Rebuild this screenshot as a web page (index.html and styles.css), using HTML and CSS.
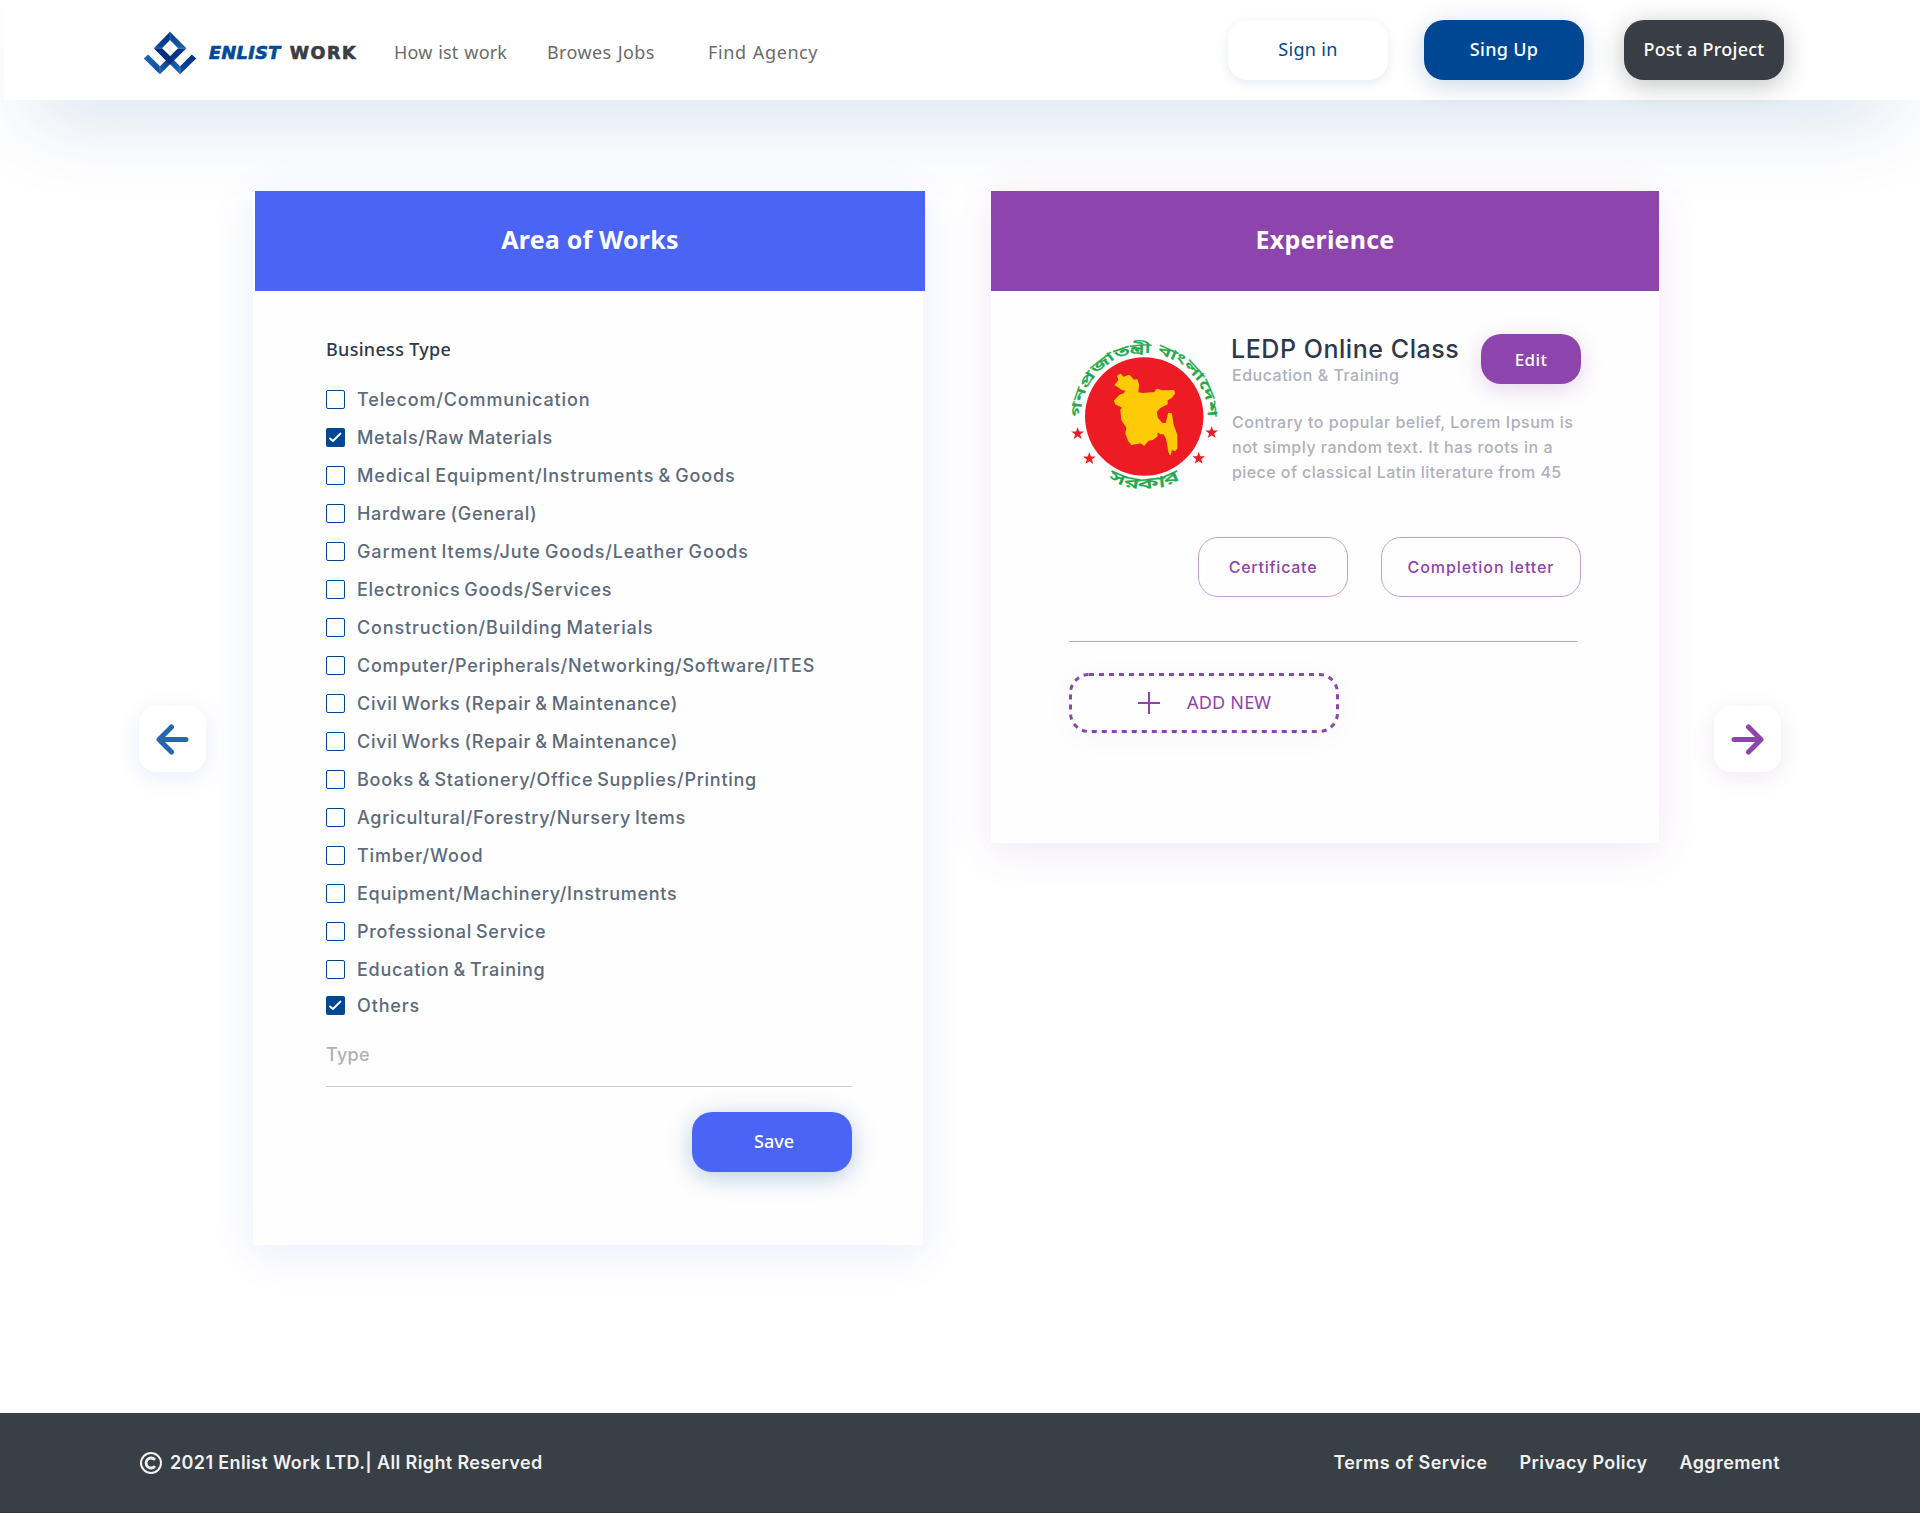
FILE: index.html
```html
<!DOCTYPE html>
<html lang="en">
<head>
<meta charset="utf-8">
<title>Enlist Work</title>
<link rel="stylesheet" href="styles.css">
</head>
<body>
<header class="site-header">
  <a class="brand">
    <svg class="brand-mark" width="54" height="44" viewBox="11 13 160 131">
      <defs>
        <linearGradient id="ga" x1="0" y1="1" x2="1" y2="0"><stop offset="0" stop-color="#0a4da0"/><stop offset="1" stop-color="#002f7d"/></linearGradient>
        <linearGradient id="gb" x1="0" y1="0" x2="1" y2="1"><stop offset="0" stop-color="#00398a"/><stop offset="1" stop-color="#1f66b5"/></linearGradient>
        <linearGradient id="gc" x1="0" y1="0" x2="1" y2="1"><stop offset="0" stop-color="#1f66b5"/><stop offset="1" stop-color="#0b4c9f"/></linearGradient>
        <linearGradient id="gd" x1="0" y1="1" x2="1" y2="0"><stop offset="0" stop-color="#1a5eae"/><stop offset=".6" stop-color="#00348a"/></linearGradient>
      </defs>
      <path fill="url(#ga)" d="M91 15v25L67 64H43z"/>
      <path fill="url(#gb)" d="M91 15l49 49h-25L91 40z"/>
      <path fill="url(#gd)" d="M140 64h-25l-54 54v24z"/>
      <path fill="url(#gb)" d="M43 64h24l54 54v24z"/>
      <path fill="#002f80" d="M67 64l24 24 12 12-12 13-36-37-12-12z"/>
      <path fill="url(#gc)" d="M61 142v-24L26 83 13 95z"/>
      <path fill="url(#ga)" d="M121 142v-24l35-35 13 12z"/>
      <path stroke="#6f9bd0" stroke-width="1.5" d="M43 64h24M115 64h25M61 118v24M121 118v24M91 15v25"/>
    </svg>
    <span class="brand-name"><span class="brand-first">ENLIST</span><span class="brand-second">WORK</span></span>
  </a>
  <nav class="main-nav">
    <a class="nav-how">How ist work</a>
    <a class="nav-jobs">Browes Jobs</a>
    <a class="nav-agency">Find Agency</a>
  </nav>
  <div class="header-actions">
    <a class="btn btn-signin">Sign in</a>
    <a class="btn btn-signup">Sing Up</a>
    <a class="btn btn-post">Post a Project</a>
  </div>
</header>

<main class="steps">
  <a class="step step-prev">
    <svg width="33" height="31" viewBox="0 0 33 31"><path d="M15.5 3 3 15.5 15.5 28M3.5 15.5h26.5"/></svg>
  </a>

  <section class="card card-areas">
    <h2 class="card-title">Area of Works</h2>
    <div class="card-body">
      <h3 class="field-title">Business Type</h3>
      <ul class="options">
        <li><i class="box"></i><span class="wide">Telecom/Communication</span></li>
        <li><i class="box checked"><svg width="19" height="19" viewBox="0 0 19 19"><path d="M4 10.5 7 13 14.5 5.5"/></svg></i><span class="narrow">Metals/Raw Materials</span></li>
        <li><i class="box"></i><span class="wide">Medical Equipment/Instruments &amp; Goods</span></li>
        <li><i class="box"></i><span>Hardware (General)</span></li>
        <li><i class="box"></i><span class="wide">Garment Items/Jute Goods/Leather Goods</span></li>
        <li><i class="box"></i><span>Electronics Goods/Services</span></li>
        <li><i class="box"></i><span class="wide">Construction/Building Materials</span></li>
        <li><i class="box"></i><span>Computer/Peripherals/Networking/Software/ITES</span></li>
        <li><i class="box"></i><span>Civil Works (Repair &amp; Maintenance)</span></li>
        <li><i class="box"></i><span>Civil Works (Repair &amp; Maintenance)</span></li>
        <li><i class="box"></i><span>Books &amp; Stationery/Office Supplies/Printing</span></li>
        <li><i class="box"></i><span>Agricultural/Forestry/Nursery Items</span></li>
        <li><i class="box"></i><span class="wide">Timber/Wood</span></li>
        <li><i class="box"></i><span>Equipment/Machinery/Instruments</span></li>
        <li><i class="box"></i><span>Professional Service</span></li>
        <li><i class="box"></i><span>Education &amp; Training</span></li>
        <li class="others"><i class="box checked"><svg width="19" height="19" viewBox="0 0 19 19"><path d="M4 10.5 7 13 14.5 5.5"/></svg></i><span class="wide">Others</span></li>
      </ul>
      <div class="type-input">Type</div>
      <a class="btn btn-save">Save</a>
    </div>
  </section>

  <section class="card card-experience">
    <h2 class="card-title">Experience</h2>
    <div class="card-body">
      <article class="entry">
        <svg class="emblem" width="170" height="170" viewBox="0 0 170 170">
          <defs>
            <path id="arc-top" d="M21.5 96.5A63.5 63.5 0 1 1 146.9 96.5"/>
            <path id="arc-bottom" d="M12.2 86.7A72 72 0 0 0 156.2 86.7"/>
            <path id="star" d="M0-20 4.7-6.5 19-6.2 7.6 2.5 11.8 16.2 0 8-11.8 16.2-7.6 2.5-19-6.2-4.7-6.5z"/>
          </defs>
          <circle cx="84.2" cy="86.5" r="59.2" fill="#ed1c24"/>
          <g transform="scale(.33333)">
            <path fill="#ffcb08" stroke="#ffcb08" stroke-width="4" stroke-linejoin="round" d="M166 165 178 150 173 138 182 133 189 143 208 136 221 151 231 150 235 165 233 188 248 191 284 188 291 178 305 183 341 182 343 190 334 202 321 210 321 222 300 232 288 245 292 265 307 281 319 280 326 250 334 252 339 285 350 315 350 355 345 361 333 358 331 373 327 365 320 325 312 311 302 311 290 302 291 318 278 328 265 330 252 345 243 338 215 343 206 332 198 310 201 293 186 270 183 240 189 232 167 222 164 212 179 196 192 192 199 181 185 178 175 170z"/>
            <g fill="#ed1c24">
              <use href="#star" x="53" y="311"/><use href="#star" x="88" y="386"/><use href="#star" x="416" y="385"/><use href="#star" x="455" y="308"/>
            </g>
          </g>
          <g class="emblem-text">
            <text font-size="13.5" textLength="200" lengthAdjust="spacingAndGlyphs"><textPath href="#arc-top" startOffset="50%">গনপ্রজাতন্ত্রী বাংলাদেশ</textPath></text>
            <text font-size="15.5" textLength="75" lengthAdjust="spacingAndGlyphs"><textPath href="#arc-bottom" startOffset="50%">সরকার</textPath></text>
          </g>
        </svg>
        <div class="entry-info">
          <div class="entry-head">
            <div>
              <h3 class="entry-title">LEDP Online Class</h3>
              <p class="entry-category">Education &amp; Training</p>
            </div>
            <a class="btn btn-edit">Edit</a>
          </div>
          <p class="entry-text">Contrary to popular belief, Lorem Ipsum is<br>not simply random text. It has roots in a<br><span class="last-line">piece of classical Latin literature from 45</span></p>
        </div>
      </article>
      <div class="documents">
        <a class="btn btn-outline btn-certificate">Certificate</a>
        <a class="btn btn-outline btn-letter">Completion letter</a>
      </div>
      <hr class="divider">
      <a class="add-new">
        <svg class="add-frame" width="270" height="60" viewBox="0 0 270 60"><rect x="1.5" y="1.5" width="267" height="57" rx="18.5"/></svg>
        <svg class="add-plus" width="22" height="22" viewBox="0 0 22 22"><path d="M11 0v22M0 11h22"/></svg>
        <span>ADD NEW</span>
      </a>
    </div>
  </section>

  <a class="step step-next">
    <svg width="33" height="31" viewBox="0 0 33 31"><path d="M17.5 3 30 15.5 17.5 28M29.5 15.5H3"/></svg>
  </a>
</main>

<footer class="site-footer">
  <svg class="copyright" width="22" height="22" viewBox="0 0 22 22"><circle cx="11" cy="11" r="10"/><path d="M15 7.9a5 5 0 1 0 0 6.2" stroke-width="2.8"/></svg>
  <span class="legal">2021 Enlist Work LTD.| All Right Reserved</span>
  <nav class="footer-nav">
    <a>Terms of Service</a>
    <a>Privacy Policy</a>
    <a>Aggrement</a>
  </nav>
</footer>
</body>
</html>
```
FILE: styles.css
```css
* { box-sizing: border-box; }
body {
  margin: 0;
  width: 1920px;
  height: 1513px;
  display: flex;
  flex-direction: column;
  overflow: hidden;
  background: #fff;
  font: 500 18px/24px Inter, sans-serif;
}
h2, h3, p, ul { margin: 0; padding: 0; font-weight: 500; }
a { white-space: nowrap; }

.site-header {
  height: 100px;
  margin-left: 4px;
  padding: 0 136px 0 139px;
  display: flex;
  align-items: center;
  background: #fff;
  box-shadow: 0 36px 84px -28px rgba(0, 71, 147, .25);
  font-family: "Noto Sans", sans-serif;
}
.brand { display: flex; align-items: center; gap: 12px; padding-top: 5px; }
.brand-mark { display: block; }
.brand-name {
  display: flex;
  justify-content: space-between;
  width: 147px;
  font: 700 17.5px/24px "DejaVu Sans", sans-serif;
}
.brand-first { color: #004a98; font-style: oblique; letter-spacing: .5px; -webkit-text-stroke: .7px #004a98; }
.brand-second { color: #383e44; letter-spacing: 1.5px; margin-right: -1px; -webkit-text-stroke: .7px #383e44; }
.main-nav {
  display: flex;
  margin-left: 38px;
  padding-top: 4px;
  color: #6b6b6b;
  font-weight: 400;
  word-spacing: 1px;
}
.nav-how { width: 153px; letter-spacing: .15px; }
.nav-jobs { width: 161px; letter-spacing: .4px; }
.nav-agency { letter-spacing: .6px; }
.header-actions { display: flex; margin-left: auto; }

.btn {
  display: flex;
  align-items: center;
  justify-content: center;
  width: 160px;
  height: 60px;
  padding-bottom: 2px;
  border-radius: 20px;
  color: #fff;
  font-family: "Noto Sans", sans-serif;
}
.btn-signin {
  margin-right: 36px;
  background: #fff;
  color: #004793;
  font-weight: 400;
  letter-spacing: .3px;
  box-shadow: 0 3px 12px rgba(0, 71, 147, .11);
}
.btn-signup {
  margin-right: 40px;
  background: #004793;
  letter-spacing: .3px;
  box-shadow: 0 5px 26px rgba(0, 71, 147, .22);
}
.btn-post {
  background: #383e44;
  letter-spacing: .25px;
  box-shadow: 0 5px 26px rgba(56, 62, 68, .32);
}

.steps { display: flex; align-items: flex-start; height: 1313px; padding-left: 139px; }
.step {
  display: flex;
  align-items: center;
  justify-content: center;
  width: 67px;
  height: 66px;
  margin-top: 606px;
  border-radius: 17px;
  background: #fff;
}
.step path { fill: none; stroke-width: 5; stroke-linecap: round; stroke-linejoin: round; }
.step-prev { box-shadow: 0 5px 22px rgba(74, 100, 246, .13); }
.step-prev path { stroke: #2566b0; }
.step-next { margin-left: 55px; box-shadow: 0 5px 22px rgba(142, 68, 173, .13); }
.step-next path { stroke: #8e44ad; }

.card { margin-top: 91px; background: #fefefe; }
.card-title {
  display: flex;
  align-items: center;
  justify-content: center;
  height: 100px;
  padding-bottom: 4px;
  color: #fff;
  font: 700 25px/34px "Noto Sans", sans-serif;
  letter-spacing: .2px;
}
.card-areas {
  width: 670px;
  height: 1054px;
  margin-left: 47px;
  box-shadow: 0 8px 40px rgba(74, 100, 246, .12);
}
.card-areas .card-title { margin: 0 -2px 0 2px; background: #4a64f6; }
.card-areas .card-body { display: flex; flex-direction: column; padding: 46px 71px 0 73px; }
.field-title {
  font: 500 18px/24px "Noto Sans", sans-serif;
  letter-spacing: .3px;
  color: #2e384d;
}
.options { list-style: none; margin-top: 19px; color: #5c6a7c; letter-spacing: .72px; word-spacing: -1.5px; }
.options li { display: flex; align-items: center; gap: 12px; height: 38px; white-space: nowrap; }
.options li span { padding-top: 2px; }
.options .others { height: 35px; }
.options .others span { padding-top: 0; }
.options .wide { letter-spacing: .86px; }
.options .narrow { letter-spacing: .6px; }
.box {
  width: 19px;
  height: 19px;
  border: 1px solid #004793;
  border-radius: 2px;
}
.box.checked { border: 0; background: #004793; }
.box svg { display: block; }
.box path { fill: none; stroke: #fff; stroke-width: 2; stroke-linecap: round; }
.type-input {
  height: 64px;
  padding-top: 20px;
  border-bottom: 1px solid #c9c9cf;
  color: #afafbd;
  letter-spacing: .3px;
}
.btn-save {
  align-self: flex-end;
  margin-top: 25px;
  padding-left: 4px;
  background: #4a64f6;
  box-shadow: 0 5px 24px rgba(0, 71, 147, .28);
}

.card-experience {
  width: 668px;
  height: 652px;
  margin-left: 68px;
  box-shadow: 0 8px 40px rgba(142, 68, 173, .12);
}
.card-experience .card-title { background: #8e44ad; }
.card-experience .card-body { padding: 39px 78px 0 69px; }
.entry { display: flex; gap: 1px; height: 170px; }
.emblem { flex: none; }
.emblem-text {
  fill: #22a84b;
  stroke: #22a84b;
  stroke-width: .3;
  font-family: "Noto Sans Bengali", sans-serif;
  text-anchor: middle;
}
.entry-info { flex: 1; padding-top: 3px; color: #afafbd; font-size: 16px; }
.entry-head { display: flex; justify-content: space-between; }
.entry-title { font-size: 25px; line-height: 32px; letter-spacing: .55px; color: #2e384d; white-space: nowrap; }
.entry-category { padding-left: 1px; line-height: 20px; letter-spacing: .5px; }
.entry-text { margin-top: 25px; padding-left: 1px; line-height: 25px; letter-spacing: .5px; white-space: nowrap; }
.last-line { letter-spacing: .43px; }
.btn-edit {
  width: 100px;
  height: 50px;
  margin-top: 1px;
  padding-bottom: 0;
  padding-top: 1px;
  background: #8e44ad;
  font-size: 17px;
  letter-spacing: .4px;
  box-shadow: 0 5px 22px rgba(142, 68, 173, .22);
}
.documents { display: flex; justify-content: flex-end; gap: 33px; margin-top: 37px; }
.btn-outline {
  border: 1px solid #c79fd6;
  padding-bottom: 0;
  color: #8e44ad;
  font: 500 16px/24px Inter, sans-serif;
}
.btn-certificate { width: 150px; letter-spacing: .75px; }
.btn-letter { width: 200px; letter-spacing: .92px; }
.divider { margin: 44px 3px 0 9px; border: 0; height: 1px; background: #c79fd6; }
.add-new {
  position: relative;
  display: flex;
  align-items: center;
  width: 270px;
  height: 60px;
  margin: 31px 0 0 9px;
  padding-left: 69px;
  gap: 27px;
  border-radius: 20px;
  color: #8e44ad;
  font: 400 18px/24px "Noto Sans", sans-serif;
  letter-spacing: .2px;
  box-shadow: 0 5px 30px rgba(0, 71, 147, .03);
}
.add-new span { padding-bottom: 2px; }
.add-frame { position: absolute; inset: 0; }
.add-frame rect { fill: none; stroke: #8e44ad; stroke-width: 3; stroke-dasharray: 5 5; }
.add-plus path { stroke: #8e44ad; stroke-width: 2; }

.site-footer {
  display: flex;
  align-items: center;
  height: 100px;
  padding: 0 140px;
  background: #383f45;
  border-bottom: 1px solid #30353a;
  color: #f1f1f2;
  font-weight: 600;
}
.copyright { fill: none; stroke: #f1f1f2; stroke-width: 2; }
.legal { margin-left: 8px; letter-spacing: .37px; }
.footer-nav { display: flex; gap: 32px; margin-left: auto; letter-spacing: .4px; }
```
